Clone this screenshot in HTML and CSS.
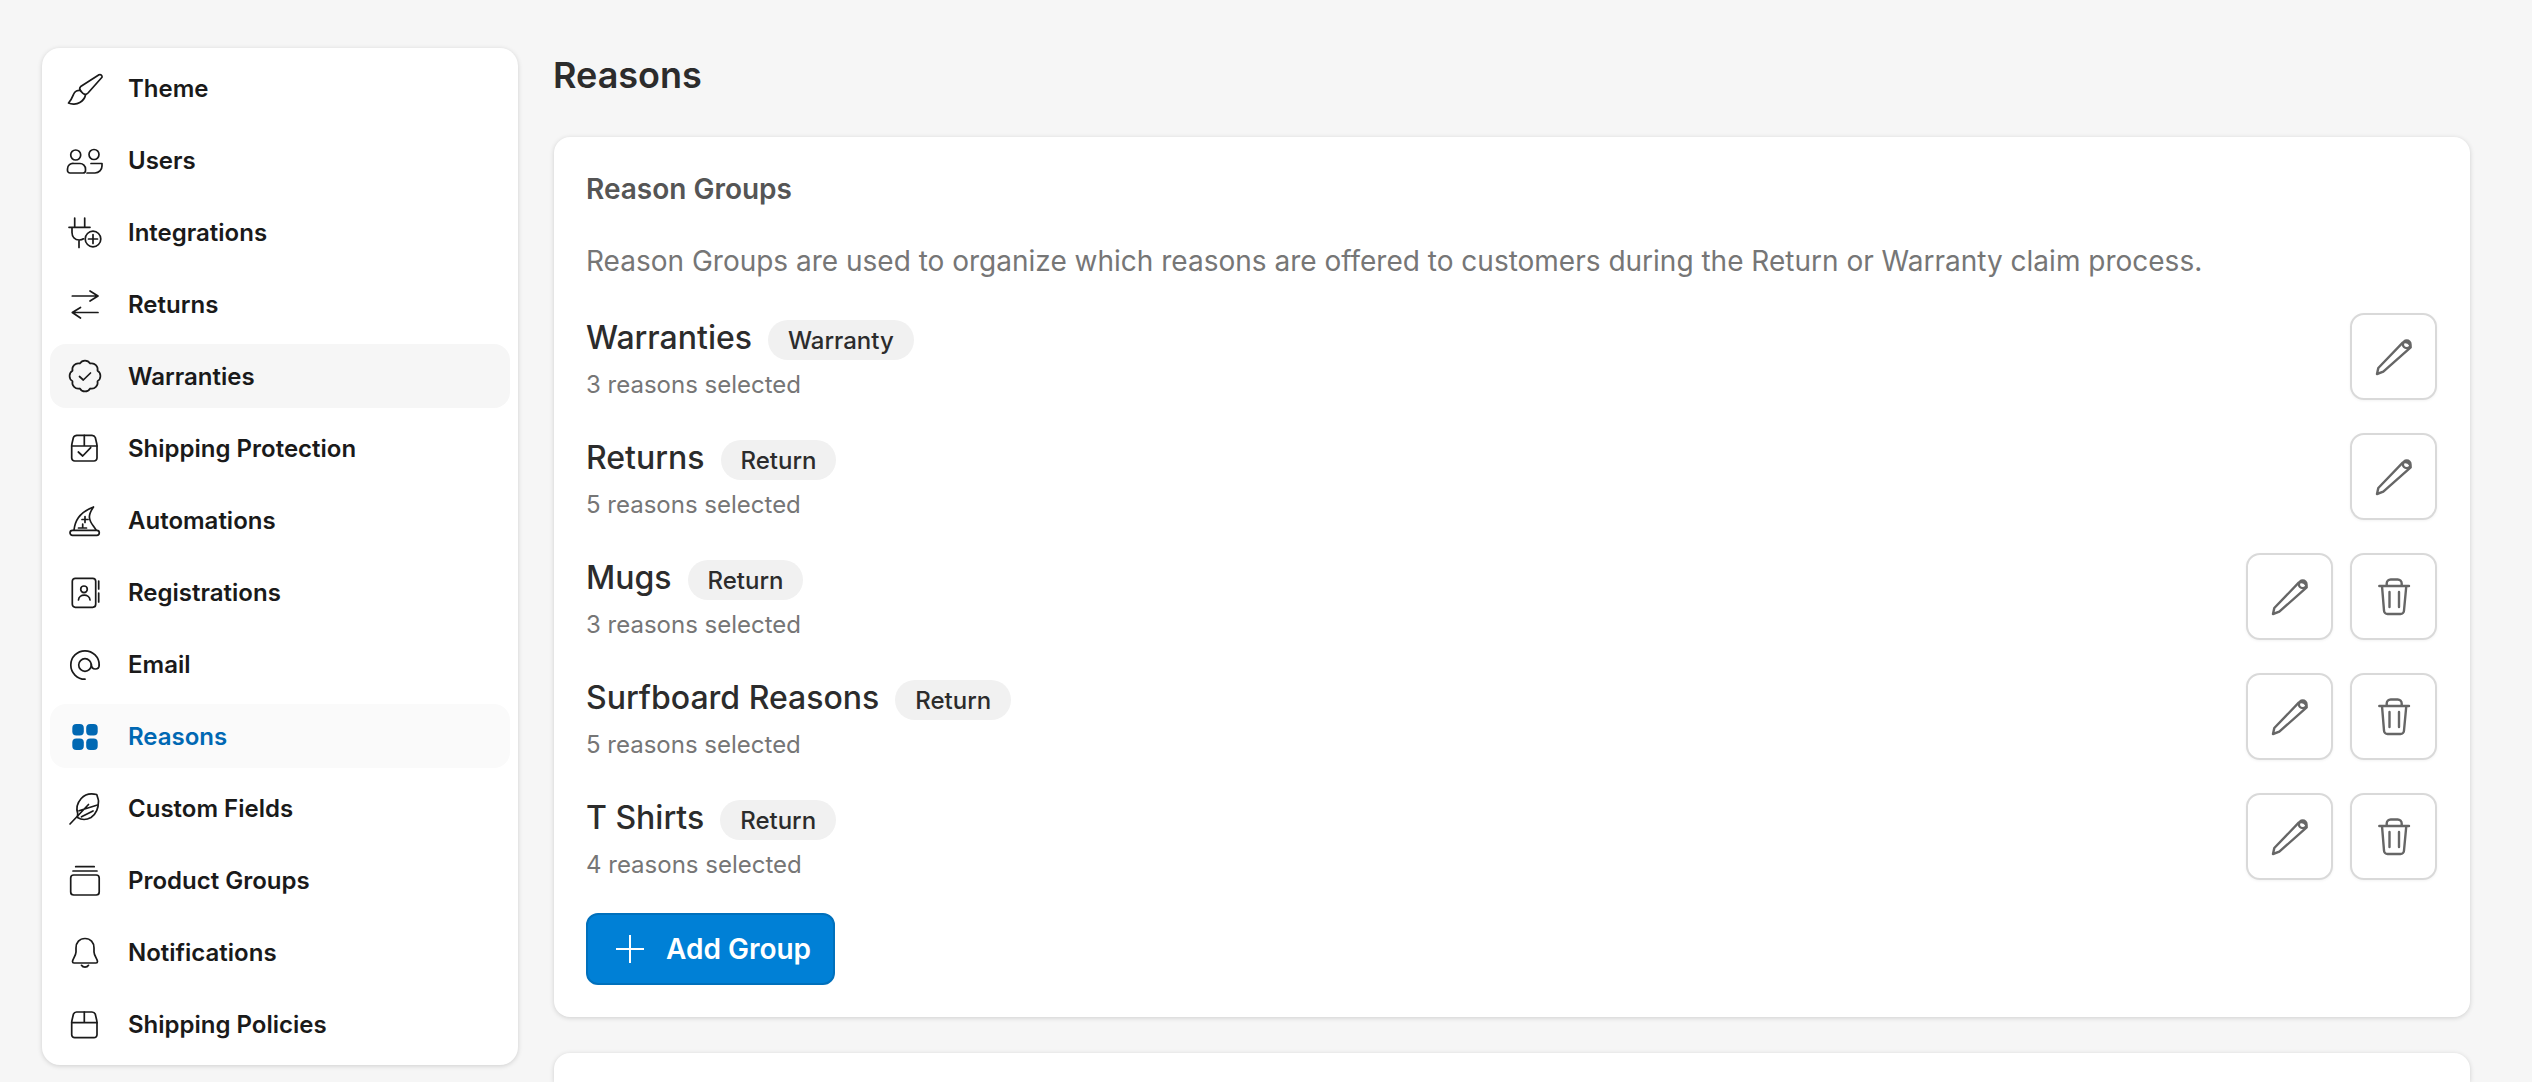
FILE: index.html
```html
<!DOCTYPE html>
<html lang="en">
<head>
<meta charset="utf-8">
<title>Reasons</title>
<link rel="stylesheet" href="styles.css">
</head>
<body>
<div class="page">
  <nav class="sidebar">
    <a class="nav-item"><svg class="nav-icon" viewBox="0 0 32 32"><path d="M30 2.800c1.800-.8 3.500.8 3 2.500L19 21c-1.500 1.500-3.500 1.500-5 .3l-2.500-2.500c-1-1.300-1-3 .2-4.300z"/><path d="M11.700 18.500c-3-.5-6 1-7 3.500-1 2.500-2 5.500-5.200 9 3 1.500 8 1.500 11.300-.5 3-1.800 5-4 5.700-7.500"/></svg><span>Theme</span></a>
    <a class="nav-item"><svg class="nav-icon" viewBox="0 0 32 32"><circle cx="6.700" cy="11" r="5"/><circle cx="25" cy="10.500" r="5"/><path d="M5 19.500h6a5.500 5.500 0 0 1 5.500 5.500v1.500a2.500 2.500 0 0 1-2.500 2.500H1a2.500 2.500 0 0 1-2.500-2.500V25A5.500 5.500 0 0 1 5 19.500z"/><path d="M22 19.500h11V22a7 7 0 0 1-7 7h-8"/></svg><span>Users</span></a>
    <a class="nav-item"><svg class="nav-icon" viewBox="0 0 32 32"><path d="M5.700 2v8.500M15.700 2v8.500M0 11.300h21M3 11.500v5c0 4.500 3 7.500 7.200 7.500 2.400 0 3.500-.6 4.300-1.200M10 24v7.500"/><circle cx="24" cy="23" r="7.800"/><path d="M24 18.500v9M19.500 23h9"/></svg><span>Integrations</span></a>
    <a class="nav-item"><svg class="nav-icon" viewBox="0 0 32 32"><path d="M3.300 8H29M21 3l8 5-8 5M29 24.500H3.300M11.500 19.500l-8.200 5 8.200 5.500"/></svg><span>Returns</span></a>
    <a class="nav-item nav-item-hover"><svg class="nav-icon" viewBox="0 0 32 32"><path d="M28.470 10.830a6 6 0 0 1 0 10.340 6 6 0 0 1-7.300 7.300 6 6 0 0 1-10.340 0 6 6 0 0 1-7.300-7.300 6 6 0 0 1 0-10.340 6 6 0 0 1 7.300-7.300 6 6 0 0 1 10.340 0 6 6 0 0 1 7.300 7.300z"/><path d="M10.500 16.500l3.800 3.500 7.200-7"/></svg><span>Warranties</span></a>
    <a class="nav-item"><svg class="nav-icon" viewBox="0 0 32 32"><path d="M7.500 3.300H23c1.700 0 2.700.8 3.300 2.200l1.400 6c.2 1 .3 2 .3 3V26a3 3 0 0 1-3 3H5.700a3 3 0 0 1-3-3V14.500c0-1 .1-2 .3-3l1.400-6c.6-1.400 1.900-2.200 3.600-2.200z"/><path d="M2.700 14H28M15.300 3.300V14M9.300 20l4.400 4 8-8.300"/></svg><span>Shipping Protection</span></a>
    <a class="nav-item"><svg class="nav-icon" viewBox="0 0 32 32"><rect x="1" y="26.300" width="29.300" height="5" rx="2.500"/><path d="M5 26C6 18 9 9 24.500 3 21 8 20 11 20.500 14c.5 5 4.500 8 6.500 12M16 12.500v6M13 15.500h6M13.700 20v4M9.500 24h8"/></svg><span>Automations</span></a>
    <a class="nav-item"><svg class="nav-icon" viewBox="0 0 32 32"><rect x="3.300" y="2.300" width="23.400" height="29" rx="3"/><circle cx="15" cy="13.300" r="3.300"/><path d="M9.500 24c.4-6.500 11-6.500 11.500 0M29.700 5v8M29.700 17v9"/></svg><span>Registrations</span></a>
    <a class="nav-item"><svg class="nav-icon" viewBox="0 0 32 32"><path d="M30.200 17A14.200 14.200 0 1 0 16 31.200"/><circle cx="16" cy="17" r="6.300"/><path d="M22.300 16c0 3.500 1.800 5 4 5s3.900-1.500 3.900-4"/></svg><span>Email</span></a>
    <a class="nav-item nav-item-active"><svg class="nav-icon-fill" viewBox="0 0 32 32"><rect x="3.300" y="4" width="11.500" height="11.500" rx="4"/><rect x="17.200" y="4" width="11.500" height="11.500" rx="4"/><rect x="3.300" y="18.400" width="11.500" height="11.500" rx="4"/><rect x="17.200" y="18.400" width="11.500" height="11.500" rx="4"/></svg><span>Reasons</span></a>
    <a class="nav-item"><svg class="nav-icon" viewBox="0 0 32 32"><path d="M27.700 2.500c-6-1.500-12 0-15.500 4-3.500 4-5.500 9-3.500 15l-.2 4c4 2.500 9 2.500 13.500 0 4.500-3 7.500-9.500 7.500-16.500 0-1.500-.5-2.500-1.800-6.500z"/><path d="M1 32L19.500 12.500M10 18.800L28.500 13M12.500 24.800L24 19"/></svg><span>Custom Fields</span></a>
    <a class="nav-item"><svg class="nav-icon" viewBox="0 0 32 32"><rect x="1.700" y="11" width="28.500" height="20" rx="3"/><path d="M4 7h24M6.700 2.700h18.500"/></svg><span>Product Groups</span></a>
    <a class="nav-item"><svg class="nav-icon" viewBox="0 0 32 32"><path d="M16 2.500c-5.500 0-9 4-9 9.500v4c0 3.500-3.500 7-3.500 9.500 0 1 .8 1.500 1.500 1.500h22c.7 0 1.500-.5 1.500-1.500 0-2.500-3.500-6-3.500-9.500v-4c0-5.500-3.500-9.500-9-9.500z"/><path d="M12.500 29.300c1.500 2.500 5.500 2.500 7 0"/></svg><span>Notifications</span></a>
    <a class="nav-item"><svg class="nav-icon" viewBox="0 0 32 32"><path d="M7.500 4H23c1.700 0 2.700.8 3.300 2.200l1.400 6c.2 1 .3 2 .3 3V26.700a3 3 0 0 1-3 3H5.700a3 3 0 0 1-3-3V15.200c0-1 .1-2 .3-3l1.400-6C5 4.800 5.800 4 7.500 4z"/><path d="M2.700 14.700H28M15.300 4v10.700"/></svg><span>Shipping Policies</span></a>
  </nav>
  <main class="content">
    <h1 class="page-title">Reasons</h1>
    <section class="card">
      <h2 class="card-title">Reason Groups</h2>
      <p class="card-desc">Reason Groups are used to organize which reasons are offered to customers during the Return or Warranty claim process.</p>
      <div class="group-list">
        <div class="group-row">
          <div class="group-info">
            <div class="group-head"><span class="group-name">Warranties</span><span class="badge">Warranty</span></div>
            <div class="group-sub">3 reasons selected</div>
          </div>
          <div class="group-actions">
            <button class="icon-btn"><svg viewBox="0 0 40 40"><path d="M3 37l1.300-6L28.700 5.700a5.500 5.500 0 0 1 8 4.600L9.300 34.700z"/><circle cx="32.700" cy="7.300" r="3.800"/></svg></button>
          </div>
        </div>
        <div class="group-row">
          <div class="group-info">
            <div class="group-head"><span class="group-name">Returns</span><span class="badge">Return</span></div>
            <div class="group-sub">5 reasons selected</div>
          </div>
          <div class="group-actions">
            <button class="icon-btn"><svg viewBox="0 0 40 40"><path d="M3 37l1.300-6L28.700 5.700a5.500 5.500 0 0 1 8 4.600L9.300 34.700z"/><circle cx="32.700" cy="7.300" r="3.800"/></svg></button>
          </div>
        </div>
        <div class="group-row">
          <div class="group-info">
            <div class="group-head"><span class="group-name">Mugs</span><span class="badge">Return</span></div>
            <div class="group-sub">3 reasons selected</div>
          </div>
          <div class="group-actions">
            <button class="icon-btn"><svg viewBox="0 0 40 40"><path d="M3 37l1.300-6L28.700 5.700a5.500 5.500 0 0 1 8 4.600L9.300 34.700z"/><circle cx="32.700" cy="7.300" r="3.800"/></svg></button>
            <button class="icon-btn"><svg viewBox="0 0 40 40"><path d="M5.300 9H35M12.700 9V6.500A4 4 0 0 1 16.700 2.500h7a4 4 0 0 1 4 4V9M8 9l2 24.500A3.500 3.500 0 0 0 13.500 37h13a3.500 3.500 0 0 0 3.500-3.500L32.300 9M15.500 15v15M25 15v15"/></svg></button>
          </div>
        </div>
        <div class="group-row">
          <div class="group-info">
            <div class="group-head"><span class="group-name">Surfboard Reasons</span><span class="badge">Return</span></div>
            <div class="group-sub">5 reasons selected</div>
          </div>
          <div class="group-actions">
            <button class="icon-btn"><svg viewBox="0 0 40 40"><path d="M3 37l1.300-6L28.700 5.700a5.500 5.500 0 0 1 8 4.600L9.300 34.700z"/><circle cx="32.700" cy="7.300" r="3.800"/></svg></button>
            <button class="icon-btn"><svg viewBox="0 0 40 40"><path d="M5.300 9H35M12.700 9V6.500A4 4 0 0 1 16.700 2.500h7a4 4 0 0 1 4 4V9M8 9l2 24.500A3.500 3.500 0 0 0 13.500 37h13a3.500 3.500 0 0 0 3.500-3.500L32.300 9M15.500 15v15M25 15v15"/></svg></button>
          </div>
        </div>
        <div class="group-row">
          <div class="group-info">
            <div class="group-head"><span class="group-name">T Shirts</span><span class="badge">Return</span></div>
            <div class="group-sub">4 reasons selected</div>
          </div>
          <div class="group-actions">
            <button class="icon-btn"><svg viewBox="0 0 40 40"><path d="M3 37l1.300-6L28.700 5.700a5.500 5.500 0 0 1 8 4.600L9.300 34.700z"/><circle cx="32.700" cy="7.300" r="3.800"/></svg></button>
            <button class="icon-btn"><svg viewBox="0 0 40 40"><path d="M5.300 9H35M12.700 9V6.500A4 4 0 0 1 16.700 2.500h7a4 4 0 0 1 4 4V9M8 9l2 24.500A3.500 3.500 0 0 0 13.500 37h13a3.500 3.500 0 0 0 3.500-3.500L32.300 9M15.500 15v15M25 15v15"/></svg></button>
          </div>
        </div>
      </div>
      <button class="add-btn"><svg viewBox="0 0 28 28"><path d="M14 0v28M0 14h28"/></svg><span>Add Group</span></button>
    </section>
    <section class="card card-next"></section>
  </main>
</div>
</body>
</html>
```

FILE: styles.css
```css
* { box-sizing: border-box; }
html, body { margin: 0; height: 100%; overflow: hidden; }
body { background: #f6f6f6; font-family: "Inter", "Liberation Sans", sans-serif; color: #1f1f1f; }
.page { display: flex; align-items: flex-start; gap: 36px; padding: 48px 62px 0 42px; height: 1082px; }

.sidebar { flex: 0 0 476px; height: 1017px; padding: 8px; display: flex; flex-direction: column; gap: 8px; background: #fff; border-radius: 18px; box-shadow: 0 1px 5px rgba(0,0,0,.16); }
.nav-item { display: flex; align-items: center; gap: 27px; height: 64px; padding-left: 19px; border-radius: 16px; font-size: 24px; font-weight: 600; color: #1a1a1a; }
.nav-item-hover { background: #f6f6f6; }
.nav-item-active { background: #fafafa; color: #0068b3; }
.nav-icon, .nav-icon-fill { width: 32px; height: 32px; flex: none; overflow: visible; }
.nav-icon { fill: none; stroke: #1a1a1a; stroke-width: 1.700; stroke-linecap: round; stroke-linejoin: round; }
.nav-icon-fill { fill: #0068b3; }

.content { flex: 1; min-width: 0; }
.page-title { margin: 0 0 0 -1px; height: 89px; padding-top: 7px; font-size: 36px; line-height: 40px; font-weight: 600; color: #2c2c2c; }

.card { background: #fff; border-radius: 16px; box-shadow: 0 1px 5px rgba(0,0,0,.16); padding: 33px 33px 33px 32px; height: 880px; }
.card-next { margin-top: 36px; height: 29px; padding: 0; border-radius: 16px 16px 0 0; }
.card-title { margin: 0; font-size: 28px; line-height: 38px; font-weight: 600; color: #555; }
.card-desc { margin: 34px 0 0; font-size: 28px; line-height: 38px; font-weight: 400; color: #767676; }

.group-list { display: flex; flex-direction: column; gap: 33px; margin-top: 33px; }
.group-row { display: flex; align-items: center; justify-content: space-between; height: 87px; }
.group-info { padding-top: 6px; }
.group-head { display: flex; align-items: flex-start; gap: 16px; height: 43px; }
.group-name { font-size: 32px; line-height: 40px; color: #2c2c2c; font-weight: 500; }
.badge { display: inline-flex; align-items: center; height: 40px; margin-top: 2px; padding: 0 20px; border-radius: 20px; background: #f1f1f1; font-size: 24px; font-weight: 500; color: #2c2c2c; }
.group-sub { margin-top: 8px; font-size: 24px; line-height: 32px; color: #767676; }
.group-actions { display: flex; gap: 17px; }
.icon-btn { width: 87px; height: 87px; padding: 0; display: flex; align-items: center; justify-content: center; background: #fff; border: 2px solid #d9d9d9; border-radius: 14px; box-shadow: 0 1px 3px rgba(0,0,0,.05); }
.icon-btn svg { width: 40px; height: 40px; fill: none; stroke: #666; stroke-width: 2.400; stroke-linejoin: round; stroke-linecap: round; }

.add-btn { display: inline-flex; align-items: center; gap: 22px; height: 72px; margin-top: 33px; padding: 0 22px 0 28px; background: #0080d6; border: 2px solid #0070bc; border-radius: 12px; color: #fff; font-family: inherit; font-size: 28px; font-weight: 600; }
.add-btn svg { width: 28px; height: 28px; fill: none; stroke: #fff; stroke-width: 2; }
```
